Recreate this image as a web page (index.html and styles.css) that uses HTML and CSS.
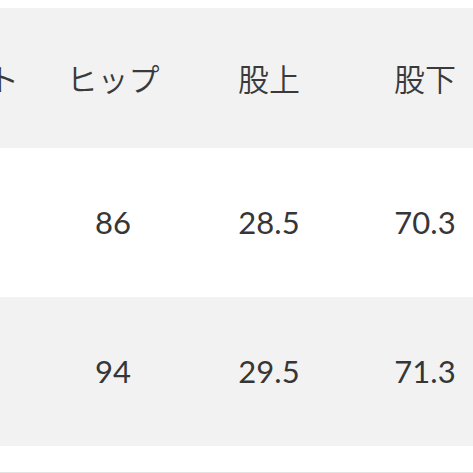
FILE: index.html
```html
<!DOCTYPE html>
<html lang="ja">
<head>
<meta charset="utf-8">
<link rel="stylesheet" href="styles.css">
</head>
<body>
<div class="sheet">
  <div class="size-table">
    <div class="row head">
      <div class="cell">ウエスト</div>
      <div class="cell">ヒップ</div>
      <div class="cell">股上</div>
      <div class="cell">股下</div>
    </div>
    <div class="row">
      <div class="cell"></div>
      <div class="cell">86</div>
      <div class="cell">28.5</div>
      <div class="cell">70.3</div>
    </div>
    <div class="row shaded">
      <div class="cell"></div>
      <div class="cell">94</div>
      <div class="cell">29.5</div>
      <div class="cell">71.3</div>
    </div>
  </div>
  <div class="rule"></div>
</div>
</body>
</html>
```
FILE: styles.css
```css
html, body {
  margin: 0;
  padding: 0;
  background: #ffffff;
  overflow: hidden;
}
.sheet {
  width: 473px;
  height: 473px;
  overflow: hidden;
  padding-top: 8px;
  box-sizing: border-box;
}
.size-table {
  margin-left: -121px;
  width: 624px;
  font-family: "Lato", "Noto Sans CJK JP", sans-serif;
  font-size: 31px;
  color: #363636;
}
.row {
  display: grid;
  grid-template-columns: repeat(4, 156px);
  height: 149px;
  align-items: center;
}
.row.head {
  height: 140px;
  background: #f2f2f2;
}
.row.shaded {
  background: #f2f2f2;
}
.cell {
  text-align: center;
  line-height: 1;
}
.head .cell {
  padding-bottom: 2px;
  font-family: "Noto Sans CJK JP", sans-serif;
  font-weight: 350;
  color: #3a3a3a;
}
.rule {
  margin-top: 26px;
  height: 1px;
  background: #e2e2e2;
}
```
